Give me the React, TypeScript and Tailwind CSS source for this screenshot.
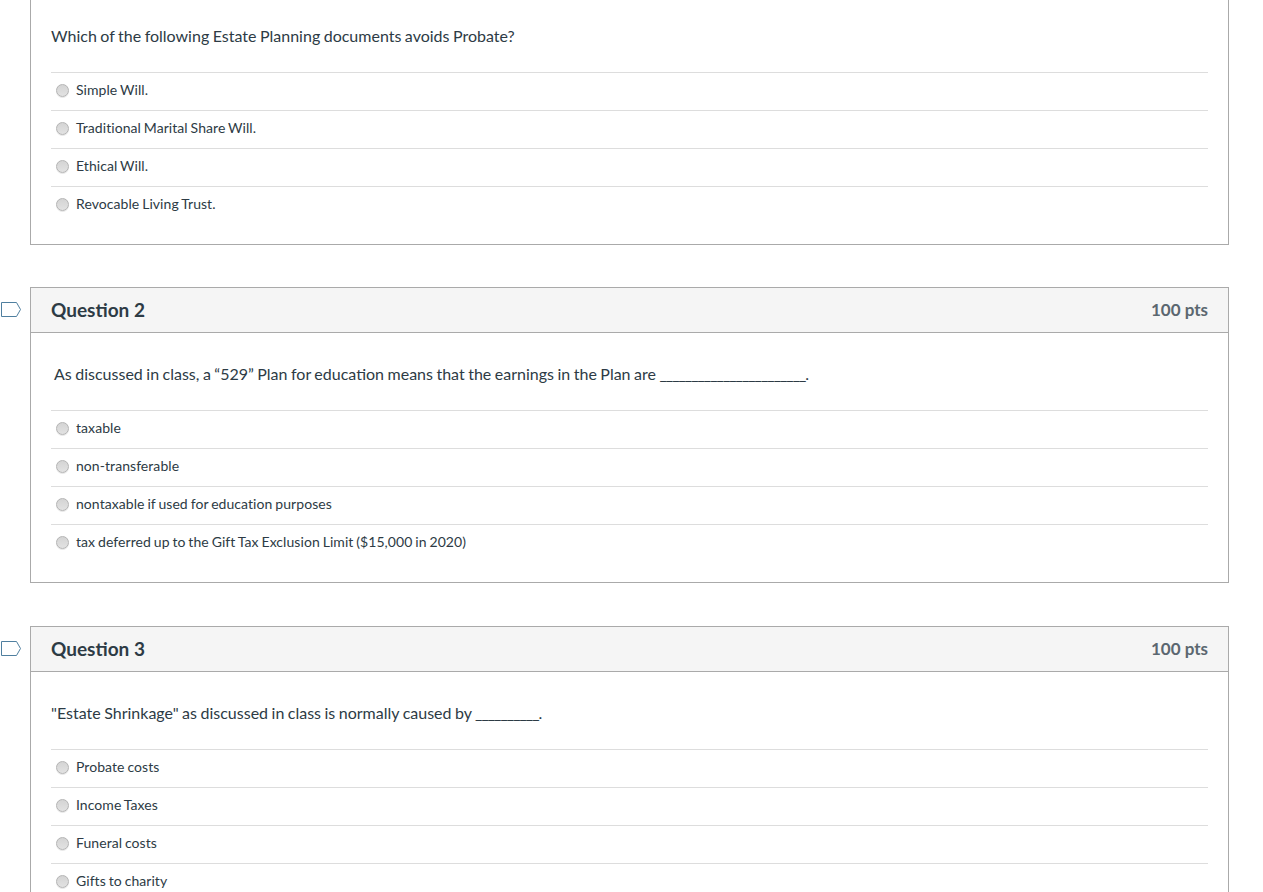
const QUESTIONS = [
  {
    id: 1,
    text: 'Which of the following Estate Planning documents avoids Probate?',
    answers: ['Simple Will.', 'Traditional Marital Share Will.', 'Ethical Will.', 'Revocable Living Trust.'],
  },
  {
    id: 2,
    title: 'Question 2',
    indent: true,
    text: 'As discussed in class, a “529” Plan for education means that the earnings in the Plan are ',
    blank: '_______________________',
    answers: ['taxable', 'non-transferable', 'nontaxable if used for education purposes', 'tax deferred up to the Gift Tax Exclusion Limit ($15,000 in 2020)'],
  },
  {
    id: 3,
    title: 'Question 3',
    nudge: true,
    text: '"Estate Shrinkage" as discussed in class is normally caused by ',
    blank: '__________',
    answers: ['Probate costs', 'Income Taxes', 'Funeral costs', 'Gifts to charity'],
  },
]

function BookmarkIcon() {
  return (
    <svg width="22" height="17" viewBox="0 0 22 17" fill="none" className="block">
      <path d="M1.5 1.5H16.5L20.5 8.5L16.5 15.5H1.5Z" stroke="#4f7f9f" strokeWidth="1" />
    </svg>
  )
}

function Answer({ label }: { label: string }) {
  return (
    <div className="flex h-[38px] items-center border-t border-[#dddddd] pl-[5px]">
      <span className="h-[13px] w-[13px] shrink-0 -translate-y-px rounded-full border border-[#b4b4b4] bg-linear-to-b from-[#d4d4d4] to-[#e2e2e2] shadow-[0_1px_0_#e8e8e8]" />
      <span className="ml-[7px] -translate-y-[2px] text-[14px] tracking-[0.06px] text-[#2d3b45] [word-spacing:-0.75px]">{label}</span>
    </div>
  )
}

function Question({ q }: { q: (typeof QUESTIONS)[number] }) {
  return (
    <div className={`flex ${q.nudge ? 'mt-px' : ''}`}>
      <div className="w-[30px] shrink-0 pt-[14px]">{q.title && <BookmarkIcon />}</div>
      <div className={`w-[1199px] border-x border-b border-[#aaaaaa] ${q.title ? 'border-t' : ''}`}>
        {q.title && (
          <div className="flex h-[45px] items-center justify-between border-b border-[#aaaaaa] bg-[#f5f5f5] px-[20px]">
            <h2 className="text-[19px] font-bold text-[#2d3b45]">{q.title}</h2>
            <span className="text-[17px] font-bold text-[#5b6770]">100 pts</span>
          </div>
        )}
        <div className="px-[20px] pb-[20px]">
          <p className={`pb-[25px] text-[16px] leading-[22px] text-[#2d3b45] [word-spacing:-0.6px] ${q.title ? 'pt-[30px]' : 'pt-[25px]'} ${q.indent ? 'pl-[3px]' : ''}`}>
            {q.text}
            {q.blank && (
              <>
                <span className="tracking-[-1px]">{q.blank}</span>.
              </>
            )}
          </p>
          {q.answers.map((a) => (
            <Answer key={a} label={a} />
          ))}
        </div>
      </div>
    </div>
  )
}

export default function App() {
  return (
    <div className="h-[892px] overflow-hidden bg-white font-['Lato','Liberation_Sans',sans-serif]">
      <div className="flex flex-col gap-[42px]">
        {QUESTIONS.map((q) => (
          <Question key={q.id} q={q} />
        ))}
      </div>
    </div>
  )
}
